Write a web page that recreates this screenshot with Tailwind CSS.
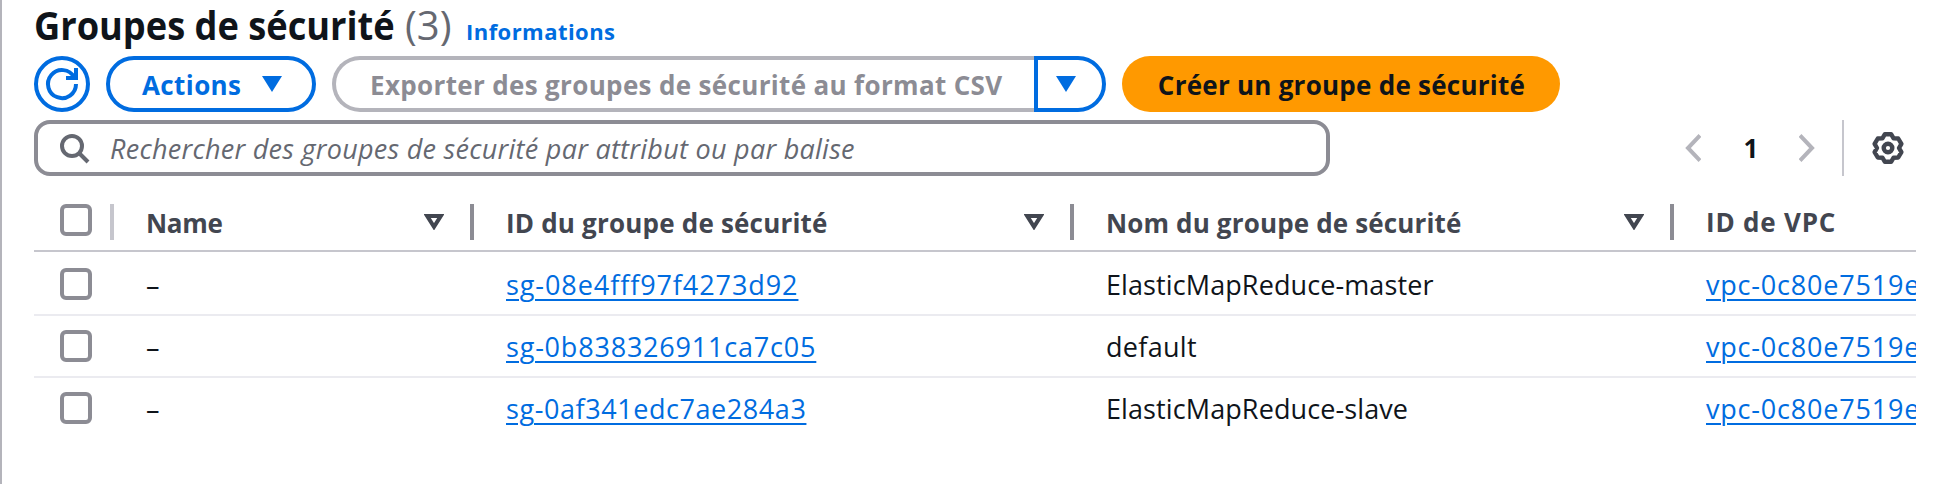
<!DOCTYPE html>
<html lang="fr">
<head>
<meta charset="utf-8">
<title>Groupes de sécurité</title>
<script src="https://cdn.jsdelivr.net/npm/@tailwindcss/browser@4"></script>
</head>
<body class="bg-white">
<svg class="hidden">
  <symbol id="sort" viewBox="0 0 20 16"><path d="M3.2 2h13.600L10 12.800z" fill="none" stroke="#424650" stroke-width="4"/></symbol>
</svg>
<main class="h-[484px] w-[1934px] overflow-hidden border-l-2 border-[#b4b4bb] bg-white pl-8 font-['Open_Sans','Noto_Sans',sans-serif] text-[26px] leading-9 text-[#0f141a]">
  <header class="flex h-14 items-baseline whitespace-nowrap leading-[49px]">
    <h1 class="w-[371px] origin-left scale-x-[0.905] text-[40px] font-bold">Groupes de sécurité</h1>
    <span class="w-[61px] text-[40px] text-[#656871]">(3)</span>
    <a class="text-[22px] font-bold tracking-[0.45px] text-[#006ce0]">Informations</a>
  </header>

  <div class="flex h-14 gap-4 whitespace-nowrap font-bold">
    <button class="flex size-14 items-center justify-center rounded-full border-4 border-[#006ce0]">
      <svg class="size-8 overflow-visible" viewBox="0 0 32 32" fill="none" stroke="#006ce0" stroke-width="4"><path d="M30 16A14 14 0 1 1 28.2 9.2"/><path d="M30 0v10H20"/></svg>
    </button>
    <button class="flex w-[210px] items-center justify-between rounded-full border-4 border-[#006ce0] pr-[30px] pl-8 text-[#006ce0]">
      <span class="pt-px tracking-[0.4px]">Actions</span>
      <svg class="h-4 w-5" viewBox="0 0 20 16"><path d="M0 0h20L10 16z" fill="#006ce0"/></svg>
    </button>
    <div class="flex">
      <button class="w-[702px] rounded-l-full border-4 border-r-0 border-[#b4b4bb] pt-px pl-[34px] text-left tracking-[0.34px] text-[#8c8c94]">Exporter des groupes de sécurité au format CSV</button>
      <button class="flex w-[72px] items-center rounded-r-full border-4 border-[#006ce0] pl-[18px]">
        <svg class="h-4 w-5" viewBox="0 0 20 16"><path d="M0 0h20L10 16z" fill="#006ce0"/></svg>
      </button>
    </div>
    <button class="w-[438px] rounded-full bg-[#ff9900] pt-px pl-px tracking-[0.25px]">Créer un groupe de sécurité</button>
  </div>

  <div class="mt-2 flex h-14 items-center">
    <div class="flex h-14 w-[1296px] items-center rounded-2xl border-4 border-[#8c8c94] pl-[22px]">
      <svg class="mr-[18px] size-8" viewBox="0 0 32 32" fill="none" stroke="#656871" stroke-width="4"><circle cx="12" cy="14" r="10"/><path d="M19 21l9 9"/></svg>
      <span class="whitespace-nowrap pt-px text-[27px] italic tracking-[0.27px] text-[#656871]">Rechercher des groupes de sécurité par attribut ou par balise</span>
    </div>
    <svg class="ml-[355px] h-7 w-4" viewBox="0 0 16 28" fill="none" stroke="#b4b4bb" stroke-width="4"><path d="M15 1.5L3 14l12 12.500"/></svg>
    <span class="ml-[42px] w-4 text-center font-bold">1</span>
    <svg class="ml-[40px] h-7 w-4" viewBox="0 0 16 28" fill="none" stroke="#b4b4bb" stroke-width="4"><path d="M1 1.500L13 14 1 26.500"/></svg>
    <div class="ml-[27px] h-14 w-0.5 bg-[#c6c6cd]"></div>
    <svg class="ml-7 size-8 overflow-visible" viewBox="0 0 32 32" fill="none" stroke="#424650" stroke-width="4.400" stroke-linejoin="round"><path d="M12.900 2.200H19.100L21.600 6.300 26.200 6.500 29.400 11.900 27 16 29.400 20.100 26.200 25.500 21.600 25.700 19.100 29.800H12.900L10.400 25.700 5.800 25.500 2.600 20.100 5 16 2.600 11.900 5.800 6.500 10.400 6.300z"/><circle cx="16" cy="16" r="4.300"/></svg>
  </div>

  <section class="mt-7 w-[1882px] overflow-hidden whitespace-nowrap text-[27px]">
    <div class="flex h-12 border-b-2 border-[#c6c6cd] text-[26px] font-bold text-[#424650]">
      <div class="w-[76px] shrink-0 pl-[26px]"><div class="size-8 rounded-md border-4 border-[#8c8c94]"></div></div>
      <div class="flex h-9 w-[360px] shrink-0 items-center border-l-4 border-[#c6c6cd] pr-[26px] pl-8"><span class="flex-1 pt-px tracking-[-0.3px]">Name</span><svg class="h-4 w-5"><use href="#sort"/></svg></div>
      <div class="flex h-9 w-[600px] shrink-0 items-center border-l-4 border-[#8c8c94] pr-[26px] pl-8"><span class="flex-1 pt-px tracking-[0.2px]">ID du groupe de sécurité</span><svg class="h-4 w-5"><use href="#sort"/></svg></div>
      <div class="flex h-9 w-[600px] shrink-0 items-center border-l-4 border-[#8c8c94] pr-[26px] pl-8"><span class="flex-1 pt-px tracking-[0.15px]">Nom du groupe de sécurité</span><svg class="h-4 w-5"><use href="#sort"/></svg></div>
      <div class="h-9 flex-1 border-l-4 border-[#8c8c94] pl-8 tracking-[0.8px]">ID de VPC</div>
    </div>
    <div class="flex h-[64px] items-center border-b-2 border-[#ebebf0] pt-0.5">
      <div class="w-[112px] shrink-0 pl-[26px]"><div class="size-8 rounded-md border-4 border-[#8c8c94]"></div></div>
      <div class="w-[360px] shrink-0 pt-0.5">–</div>
      <div class="w-[600px] shrink-0 pt-0.5 text-[#006ce0]"><a class="underline decoration-2 underline-offset-4 tracking-[0.92px]">sg-08e4fff97f4273d92</a></div>
      <div class="w-[600px] shrink-0 pt-0.5 tracking-[0.1px]">ElasticMapReduce-master</div>
      <div class="pt-0.5 text-[#006ce0]"><a class="underline decoration-2 underline-offset-4 tracking-[0.8px]">vpc-0c80e7519e</a></div>
    </div>
    <div class="flex h-[62px] items-center border-b-2 border-[#ebebf0]">
      <div class="w-[112px] shrink-0 pl-[26px]"><div class="size-8 rounded-md border-4 border-[#8c8c94]"></div></div>
      <div class="w-[360px] shrink-0 pt-0.5">–</div>
      <div class="w-[600px] shrink-0 pt-0.5 text-[#006ce0]"><a class="underline decoration-2 underline-offset-4 tracking-[0.8px]">sg-0b838326911ca7c05</a></div>
      <div class="w-[600px] shrink-0 pt-0.5 tracking-[0.3px]">default</div>
      <div class="pt-0.5 text-[#006ce0]"><a class="underline decoration-2 underline-offset-4 tracking-[0.8px]">vpc-0c80e7519e</a></div>
    </div>
    <div class="flex h-[60px] items-center">
      <div class="w-[112px] shrink-0 pl-[26px]"><div class="size-8 rounded-md border-4 border-[#8c8c94]"></div></div>
      <div class="w-[360px] shrink-0 pt-0.5">–</div>
      <div class="w-[600px] shrink-0 pt-0.5 text-[#006ce0]"><a class="underline decoration-2 underline-offset-4 tracking-[0.57px]">sg-0af341edc7ae284a3</a></div>
      <div class="w-[600px] shrink-0 pt-0.5 tracking-[0.1px]">ElasticMapReduce-slave</div>
      <div class="pt-0.5 text-[#006ce0]"><a class="underline decoration-2 underline-offset-4 tracking-[0.8px]">vpc-0c80e7519e</a></div>
    </div>
  </section>
</main>
</body>
</html>
